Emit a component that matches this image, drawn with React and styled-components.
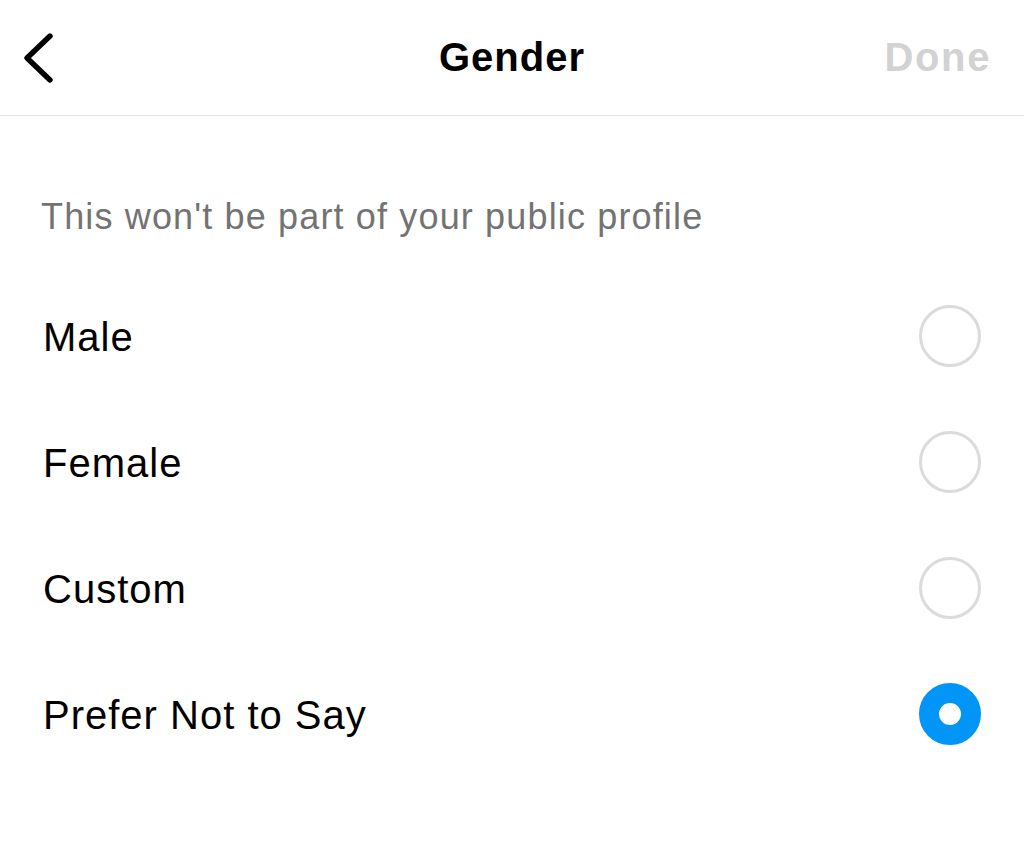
import React, { useState } from "react";
import styled, { createGlobalStyle } from "styled-components";

const Global = createGlobalStyle`
  html, body { margin: 0; padding: 0; background: #fff; }
  body { font-family: "Liberation Sans", Arial, sans-serif; -webkit-font-smoothing: antialiased; }
`;

const Page = styled.div`
  width: 1024px;
  min-height: 862px;
  background: #fff;
`;

const Header = styled.header`
  height: 115px;
  border-bottom: 1px solid #e3e3e3;
  display: grid;
  grid-template-columns: 1fr auto 1fr;
  align-items: center;
  padding: 0 22px;
`;

const BackButton = styled.button`
  justify-self: start;
  background: none;
  border: none;
  padding: 0;
  width: 36px;
  height: 56px;
  display: flex;
  align-items: center;
  cursor: pointer;
`;

const Title = styled.h1`
  margin: 0;
  font-size: 40px;
  font-weight: 700;
  color: #000;
  letter-spacing: 1px;
`;

const DoneButton = styled.button`
  justify-self: end;
  background: none;
  border: none;
  padding: 0 11px 0 0;
  font-family: inherit;
  font-size: 40px;
  font-weight: 700;
  letter-spacing: 1.6px;
  color: #d2d2d2;
`;

const Content = styled.main`
  padding: 79px 43px 0 41px;
`;

const Note = styled.p`
  margin: 0 0 35px;
  height: 44px;
  line-height: 44px;
  font-size: 36px;
  letter-spacing: 1.15px;
  color: #737373;
`;

const Row = styled.label`
  height: 126px;
  display: flex;
  align-items: center;
  justify-content: space-between;
  padding-left: 2px;
  cursor: pointer;
`;

const Label = styled.span`
  font-size: 40px;
  letter-spacing: 1px;
  color: #000;
`;

const Radio = styled.span`
  box-sizing: border-box;
  width: 62px;
  height: 62px;
  border-radius: 50%;
  border: ${(p) => (p.$checked ? "20px solid #0095f6" : "3px solid #dbdbdb")};
  background: #fff;
  margin-top: -2px;
`;

const options = ["Male", "Female", "Custom", "Prefer Not to Say"];

export default function App() {
  const [value, setValue] = useState("Prefer Not to Say");
  return (
    <Page>
      <Global />
      <Header>
        <BackButton aria-label="Back">
          <svg width="34" height="52" viewBox="0 0 34 52">
            <path
              d="M28 4 L5 26 L28 48"
              fill="none"
              stroke="#000"
              strokeWidth="5.4"
              strokeLinecap="round"
              strokeLinejoin="round"
            />
          </svg>
        </BackButton>
        <Title>Gender</Title>
        <DoneButton>Done</DoneButton>
      </Header>
      <Content>
        <Note>This won't be part of your public profile</Note>
        {options.map((o) => (
          <Row key={o} onClick={() => setValue(o)}>
            <Label>{o}</Label>
            <Radio $checked={value === o} />
          </Row>
        ))}
      </Content>
    </Page>
  );
}
